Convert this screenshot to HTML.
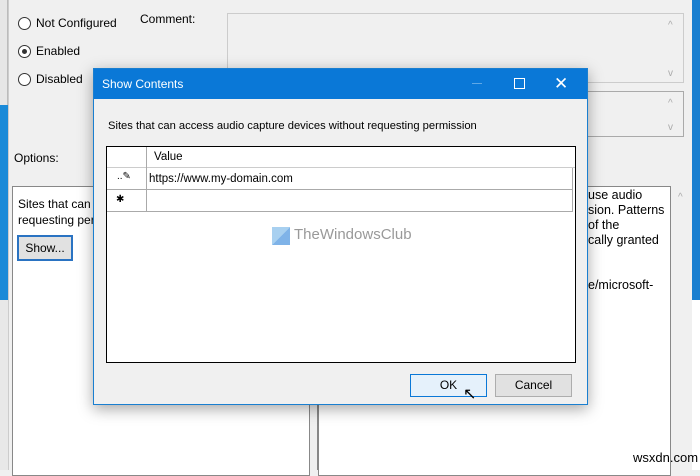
<!DOCTYPE html>
<html><head><style>
*{margin:0;padding:0;box-sizing:border-box}
body{width:700px;height:470px;overflow:hidden;position:relative;background:#f0f0f0;font-family:"Liberation Sans",sans-serif;font-size:12px;color:#000}
.a{position:absolute}
.radio{width:13px;height:13px;border:1px solid #333;border-radius:50%;background:#fff}
.t{font-size:12px;white-space:nowrap}
.sa{color:#aaa;font-size:10px}
</style></head><body>
<div class="a" style="left:0;top:0;width:8px;height:105px;background:#e6e6e6;border-right:1px solid #bbb"></div>
<div class="a" style="left:0;top:105px;width:8px;height:195px;background:#1a8ad8"></div>
<div class="a" style="left:0;top:300px;width:8px;height:170px;background:#e8e8e8"></div>
<div class="a" style="left:8px;top:0;width:1px;height:470px;background:#ccc"></div>
<div class="a" style="left:692px;top:0;width:8px;height:300px;background:#1a7fd0"></div>
<div class="a" style="left:692px;top:300px;width:8px;height:170px;background:#fff"></div>

<div class="a radio" style="left:18px;top:17px"></div><div class="a t" style="left:36px;top:16px">Not Configured</div>
<div class="a radio" style="left:18px;top:45px"></div><div class="a" style="left:22px;top:49px;width:5px;height:5px;border-radius:50%;background:#333"></div><div class="a t" style="left:36px;top:44px">Enabled</div>
<div class="a radio" style="left:18px;top:73px"></div><div class="a t" style="left:36px;top:72px">Disabled</div>
<div class="a t" style="left:140px;top:12px">Comment:</div>
<div class="a" style="left:227px;top:13px;width:457px;height:70px;border:1px solid #ccc;background:#f0f0f0"></div>
<div class="a sa" style="left:668px;top:20px">^</div><div class="a sa" style="left:668px;top:68px">v</div>
<div class="a" style="left:227px;top:91px;width:457px;height:46px;border:1px solid #aaa;background:#f0f0f0"></div>
<div class="a sa" style="left:668px;top:98px">^</div><div class="a sa" style="left:668px;top:122px">v</div>
<div class="a t" style="left:14px;top:151px">Options:</div>

<div class="a" style="left:12px;top:186px;width:298px;height:290px;border:1px solid #888;background:#fff"></div>
<div class="a t" style="left:18px;top:196px;line-height:16px">Sites that can<br>requesting per</div>
<div class="a" style="left:17px;top:235px;width:56px;height:26px;border:2px solid #2a73c2;background:#e1e1e1;text-align:center;line-height:22px">Show...</div>
<div class="a" style="left:309px;top:165px;width:9px;height:305px;background:#f0f0f0;border-left:1px solid #888;border-right:1px solid #888"></div>
<div class="a" style="left:318px;top:186px;width:353px;height:290px;border:1px solid #888;background:#fff"></div>
<div class="a t" style="left:588px;top:188px;line-height:15px;font-size:12.5px">use audio<br>sion. Patterns<br>of the<br>cally granted<br><br><br>e/microsoft-</div>
<div class="a sa" style="left:678px;top:192px">^</div>
<div class="a" style="left:633px;top:450px;font-size:13px">wsxdn.com</div>

<div class="a" style="left:93px;top:68px;width:495px;height:337px;background:#f0f0f0;border:1px solid #1a7fd0;box-shadow:0 4px 14px rgba(0,0,0,.35)">
 <div style="height:30px;background:#0a78d7;color:#fff;font-size:12px;line-height:30px;padding-left:8px;position:relative">Show Contents
  <span class="a" style="left:378px;top:14px;width:10px;height:1px;background:#5fa8e6"></span>
  <span class="a" style="left:420px;top:9px;width:11px;height:11px;border:1px solid #fff"></span>
  <span class="a" style="left:460px;top:0;font-size:17px">✕</span>
 </div>
 <div class="a t" style="left:14px;top:51px;font-size:11.2px">Sites that can access audio capture devices without requesting permission</div>
 <div class="a" style="left:12px;top:77px;width:470px;height:217px;border:1px solid #000;background:#fff">
  <div class="a" style="left:0;top:0;width:468px;height:21px;border-bottom:1px solid #ccc"></div>
  <div class="a" style="left:0;top:21px;width:466px;height:22px;border-bottom:1px solid #aaa;border-right:1px solid #aaa"></div>
  <div class="a" style="left:0;top:43px;width:466px;height:22px;border-bottom:1px solid #aaa;border-right:1px solid #aaa"></div>
  <div class="a" style="left:39px;top:0;width:1px;height:65px;background:#aaa"></div>
  <div class="a t" style="left:47px;top:4px;font-size:11.5px">Value</div>
  <div class="a t" style="left:42px;top:26px;font-size:11.5px">https://www.my-domain.com</div>
  <div class="a" style="left:10px;top:24px;font-size:10px">..✎</div>
  <div class="a" style="left:9px;top:47px;font-size:10px">✱</div>
  <div class="a" style="left:165px;top:80px;width:18px;height:18px;background:linear-gradient(135deg,#a8d0f0 50%,#7fb3e8 50%)"></div>
  <div class="a" style="left:187px;top:79px;font-size:15px;color:#999">TheWindowsClub</div>
 </div>
 <div class="a" style="left:316px;top:305px;width:77px;height:23px;border:1px solid #0a78d7;background:#e5f1fb;text-align:center;line-height:21px">OK</div>
 <div class="a" style="left:401px;top:305px;width:77px;height:23px;border:1px solid #adadad;background:#e1e1e1;text-align:center;line-height:21px">Cancel</div>
 <div class="a" style="left:369px;top:315px;font-size:16px">↖</div>
</div>
</body></html>
